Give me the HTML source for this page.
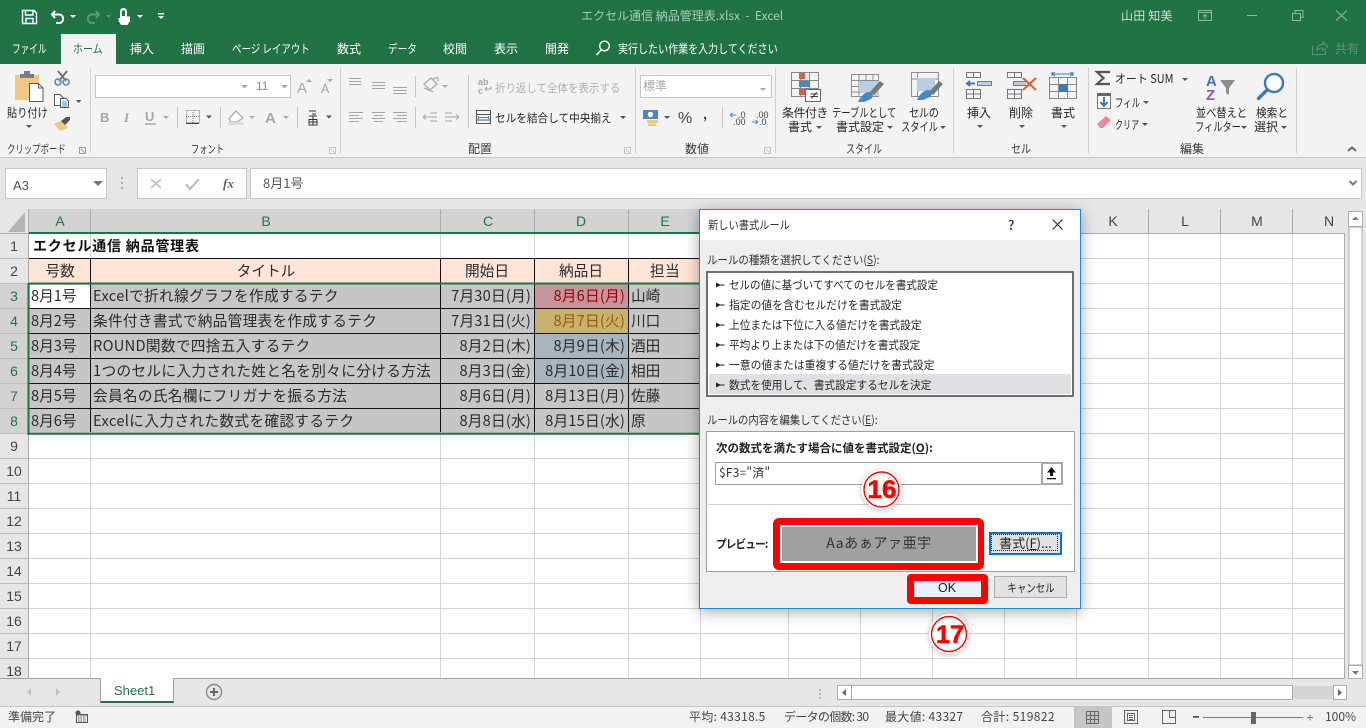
<!DOCTYPE html>
<html lang="ja"><head><meta charset="utf-8"><title>Excel</title>
<style>
html,body{margin:0;padding:0;width:1366px;height:728px;overflow:hidden;background:#e6e6e6}
body{font-family:"Noto Sans CJK JP","Liberation Sans",sans-serif;position:relative;color:#333}
.b{position:absolute}
.t{position:absolute;white-space:nowrap;line-height:20px;height:20px;font-size:12px;color:#3a3a3a;transform-origin:0 50%}
.c{transform:translateX(-50%);transform-origin:50% 50%}
.r{transform:translateX(-100%)}
.tab{color:#fff;top:39px;font-size:12px}
.dim{color:#b2b2b2}
.k{color:#262626}
.g{font-size:14.67px;color:#2b2b2b}
.hd{font-size:14px;color:#217346;font-family:"Liberation Sans",sans-serif;top:211px}
.hu{font-size:14px;color:#444;font-family:"Liberation Sans",sans-serif;top:211px}
.rn{font-size:14px;font-family:"Liberation Sans",sans-serif;color:#444;left:14px}
.rs{color:#217346}
.lb{font-size:11.5px;color:#262626;left:729px}
.gl{top:139px}
svg{position:absolute;left:0;top:0;overflow:visible}
</style></head><body>

<div class="b" style="left:0;top:0;width:1366px;height:64px;background:#217346"></div>
<div class="b" style="left:61px;top:34px;width:55px;height:30px;background:#f3f3f3"></div>
<div class="b" style="left:0;top:64px;width:1366px;height:93px;background:#f3f3f3;border-bottom:1px solid #c6c6c6"></div>

<!-- Title -->
<div class="t" style="left:581px;top:6px;color:#a9cab8">エクセル通信 納品管理表.xlsx&nbsp; -&nbsp; Excel</div>
<div class="t" style="left:1121px;top:6px;color:#cfe0d6;letter-spacing:.2px">山田 知美</div>

<!-- Tabs -->
<div class="t tab" style="left:12px;transform:scaleX(.72)">ファイル</div>
<div class="t tab" style="left:73px;color:#217346;transform:scaleX(.83)">ホーム</div>
<div class="t tab" style="left:130px">挿入</div>
<div class="t tab" style="left:181px">描画</div>
<div class="t tab" style="left:232px;transform:scaleX(.79)">ページ レイアウト</div>
<div class="t tab" style="left:337px">数式</div>
<div class="t tab" style="left:388px;transform:scaleX(.8)">データ</div>
<div class="t tab" style="left:443px">校閲</div>
<div class="t tab" style="left:494px">表示</div>
<div class="t tab" style="left:545px">開発</div>
<div class="t tab" style="left:618px;transform:scaleX(.835)">実行したい作業を入力してください</div>
<div class="t" style="left:1335px;top:39px;color:#5c9577">共有</div>

<!-- Ribbon text -->
<div class="t k" style="left:7px;top:103px;transform:scaleX(.85)">貼り付け</div>
<div class="t gl" style="left:7px;font-size:11.5px;transform:scaleX(.73)">クリップボード</div>
<div class="t gl" style="left:191px;font-size:11.5px;transform:scaleX(.72)">フォント</div>
<div class="t gl" style="left:468px">配置</div>
<div class="t gl" style="left:685px">数値</div>
<div class="t gl" style="left:846px;transform:scaleX(.75)">スタイル</div>
<div class="t gl" style="left:1011px;transform:scaleX(.83)">セル</div>
<div class="t gl" style="left:1180px">編集</div>
<div class="t dim" style="left:495px;top:78px;font-size:11.5px;transform:scaleX(.91)">折り返して全体を表示する</div>
<div class="t k" style="left:495px;top:108px;font-size:11.5px;transform:scaleX(.925)">セルを結合して中央揃え</div>
<div class="t k" style="left:782px;top:103px;letter-spacing:-.55px">条件付き</div>
<div class="t k" style="left:788px;top:117px">書式</div>
<div class="t k" style="left:832px;top:103px;transform:scaleX(.775)">テーブルとして</div>
<div class="t k" style="left:836px;top:117px">書式設定</div>
<div class="t k" style="left:909px;top:103px;transform:scaleX(.83)">セルの</div>
<div class="t k" style="left:901px;top:117px;transform:scaleX(.77)">スタイル</div>
<div class="t k" style="left:967px;top:103px">挿入</div>
<div class="t k" style="left:1009px;top:103px">削除</div>
<div class="t k" style="left:1051px;top:103px">書式</div>
<div class="t k" style="left:1115px;top:69px;transform:scaleX(.91)">オート SUM</div>
<div class="t k" style="left:1115px;top:93px;transform:scaleX(.7)">フィル</div>
<div class="t k" style="left:1115px;top:115px;transform:scaleX(.67)">クリア</div>
<div class="t k" style="left:1196px;top:103px;transform:scaleX(.85)">並べ替えと</div>
<div class="t k" style="left:1195px;top:117px;transform:scaleX(.77)">フィルター</div>
<div class="t k" style="left:1256px;top:103px;transform:scaleX(.89)">検索と</div>
<div class="t k" style="left:1254px;top:117px">選択</div>

<!-- Ribbon boxes -->
<div class="b" style="left:95px;top:75px;width:156px;height:21px;background:#fff;border:1px solid #c6c6c6"></div>
<div class="b" style="left:252px;top:75px;width:38px;height:21px;background:#fff;border:1px solid #c6c6c6;border-left:0"></div>
<div class="t" style="left:256px;top:76px;color:#8d8d8d;font-family:'Liberation Sans',sans-serif">11</div>
<div class="b" style="left:640px;top:75px;width:130px;height:21px;background:#fff;border:1px solid #c6c6c6"></div>
<div class="t" style="left:643px;top:76px;color:#aaa">標準</div>

<!-- Formula bar -->
<div class="b" style="left:5px;top:168px;width:100px;height:29px;background:#fff;border:1px solid #c6c6c6"></div>
<div class="b" style="left:137px;top:168px;width:108px;height:29px;background:#fff;border:1px solid #c6c6c6"></div>
<div class="b" style="left:250px;top:168px;width:1110px;height:29px;background:#fff;border:1px solid #c6c6c6"></div>
<div class="t" style="left:13px;top:176px;font-size:13px;color:#555;font-family:'Liberation Sans',sans-serif">A3</div>
<div class="t" style="left:263px;top:173px;font-size:13px;color:#555">8月1号</div>

<!-- Sheet -->
<div class="b" style="left:29px;top:234px;width:1316px;height:444px;background:#fff"></div>
<div class="b" style="left:29px;top:209px;width:671px;height:24px;background:#d2d2d2"></div>
<div class="b" style="left:0;top:284px;width:28px;height:150px;background:#d2d2d2"></div>
<div class="b" style="left:29px;top:259px;width:671px;height:24px;background:#fce4d6"></div>
<div class="b" style="left:29px;top:284px;width:671px;height:150px;background:#c6c6c6"></div>
<div class="b" style="left:30px;top:285px;width:60px;height:23px;background:#fff"></div>
<div class="b" style="left:535px;top:284px;width:93px;height:24px;background:#c4949b"></div>
<div class="b" style="left:535px;top:309px;width:93px;height:24px;background:#c8b06e"></div>
<div class="b" style="left:535px;top:334px;width:93px;height:49px;background:#a8b4be"></div>

<svg width="1366" height="728" viewBox="0 0 1366 728">
<!-- gridlines -->
<path d="M29 258.5H1345M29 283.5H1345M29 308.5H1345M29 333.5H1345M29 358.5H1345M29 383.5H1345M29 408.5H1345M29 433.5H1345M29 458.5H1345M29 483.5H1345M29 508.5H1345M29 533.5H1345M29 558.5H1345M29 583.5H1345M29 608.5H1345M29 633.5H1345M29 658.5H1345M90.5 234V678M440.5 234V678M534.5 234V678M628.5 234V678M700.5 234V678M788.5 234V678M860.5 234V678M932.5 234V678M1004.5 234V678M1076.5 234V678M1148.5 234V678M1220.5 234V678M1292.5 234V678" stroke="#d4d4d4" fill="none"/>
<!-- header separators -->
<path d="M90.5 209V233M440.5 209V233M534.5 209V233M628.5 209V233M1076.5 209V233M1148.5 209V233M1220.5 209V233M1292.5 209V233" stroke="#ababab"/>
<path d="M0 258.5H28M0 283.5H28M0 308.5H28M0 333.5H28M0 358.5H28M0 383.5H28M0 408.5H28M0 433.5H28M0 458.5H28M0 483.5H28M0 508.5H28M0 533.5H28M0 558.5H28M0 583.5H28M0 608.5H28M0 633.5H28M0 658.5H28" stroke="#bdbdbd"/>
<path d="M28.5 209V678" stroke="#ababab"/>
<path d="M0 233.5H28M1076 233.5H1345" stroke="#ababab"/>
<path d="M1344.5 233V678" stroke="#ababab"/>
<path d="M25 212V232H8Z" fill="#b4b4b4"/>
<!-- black table borders -->
<path d="M29 258.5H700M29 308.5H700M29 333.5H700M29 358.5H700M29 383.5H700M29 408.5H700M90.5 259V432M440.5 259V432M534.5 259V432M628.5 259V432" stroke="#111"/>
<!-- selection -->
<path d="M29 233H700M29 283.5H700M29 433.8H700" stroke="#217346" stroke-width="2"/>
<path d="M28.5 283V435" stroke="#217346" stroke-width="2"/>

<!-- QAT -->
<g fill="none" stroke="#fff">
<path d="M22.5 10.5H34L36.5 13V23.5H22.5Z" stroke-width="1.4"/>
<path d="M25.5 11V15H33V11M26 23V18.5H33V23" stroke-width="1.4"/>
<path d="M55 11L52 14.5L55 18M52.5 14.5H59C64.5 14.5 64.5 23 59 23H56" stroke-width="2"/>
<g stroke="#5d9a7c"><path d="M96 11L99 14.5L96 18M98.5 14.5H92C86.5 14.5 86.5 23 92 23H95" stroke-width="2"/></g>
</g>
<path d="M70 15H76L73 18ZM137 15H143L140 18Z" fill="#fff"/>
<path d="M106 15H111L108.5 18Z" fill="#5d9a7c"/>
<path d="M158 13H164V14.5H158ZM158 16H164L161 19Z" fill="#fff"/>
<path d="M120 11.5a3.5 3.5 0 0 1 7 0V16.5H130V21L127.5 25H121L118.500 20.5V18H120Z" fill="#fff"/>
<path d="M122 10.5H125V16H122Z" fill="#217346"/>
<!-- search -->
<circle cx="604.5" cy="46" r="4.8" fill="none" stroke="#fff" stroke-width="1.3"/><path d="M601 50L596.5 55" stroke="#fff" stroke-width="1.5"/>
<!-- window -->
<g fill="none" stroke="#8fb9a2">
<path d="M1198.5 10.5H1211.5V20.500H1198.5ZM1198.5 12.5H1211.5M1205 19V14.5M1203 16.5L1205 14.5L1207 16.5"/>
<path d="M1247 15.5H1257"/>
<path d="M1292.5 13.5H1300.5V20.5H1292.5ZM1295 13V10.5H1303V17.5H1300.5"/>
<path d="M1336 10.5L1347 20.5M1347 10.5L1336 20.5" stroke-width="1.100"/>
<path d="M1312.5 45.5V54.5H1325.5V50.5M1317 50C1317.5 46 1320 44.5 1323 44.5V42L1328 46.5L1323 50.5V48C1320.5 48 1318.5 48.5 1317 50Z" stroke="#5c9577"/>
</g>

<!-- separators -->
<path d="M90.5 68V153M340.5 68V153M635.5 68V153M775.5 68V153M953.5 68V153M1088.5 68V153M1296.5 68V153" stroke="#d0d0d0"/>
<path d="M177.5 107V128M220.5 107V128M297.5 107V128M415.5 76V97M415.5 107V128M468.5 75V128M722.5 107V128" stroke="#c6c6c6"/>
<!-- launchers -->
<g fill="none" stroke="#999"><path d="M79.5 147.5H85.5V153.5H79.5ZM81 149L84.5 152.5"/><path d="M329.5 147.5H335.5V153.5H329.5ZM331 149L334.5 152.5" stroke="#c4c4c4"/><path d="M624.5 147.5H630.5V153.5H624.5ZM626 149L629.5 152.5" stroke="#c4c4c4"/><path d="M764.5 147.5H770.5V153.5H764.5ZM766 149L769.5 152.5" stroke="#c4c4c4"/></g>

<!-- paste -->
<path d="M15 75H39V100H15Z" fill="#efc881"/>
<rect x="24" y="71" width="6" height="5" fill="#7c7c7c"/>
<path d="M20 74H34V78H20Z" fill="#7c7c7c"/>
<path d="M29.5 83.5H38.5L43 88V101.5H29.5Z" fill="#fff" stroke="#5a5a5a"/>
<path d="M38.5 83.5V88H43" fill="none" stroke="#5a5a5a"/>
<!-- scissors -->
<path d="M58 71L66 81M67 71L59 81" stroke="#6a6a6a" stroke-width="1.8" fill="none"/>
<circle cx="58" cy="82" r="3" fill="none" stroke="#4a86c5" stroke-width="1.5"/><circle cx="66" cy="82" r="3" fill="none" stroke="#4a86c5" stroke-width="1.5"/>
<!-- copy -->
<path d="M54.5 94.5H60L63 97.5V99H60.5V105.5H54.5Z" fill="#fff" stroke="#555"/>
<path d="M60.5 98.5H66L68.5 101V107.5H60.5Z" fill="#fff" stroke="#555"/>
<path d="M62 102H67M62 104H67M62 106H67" stroke="#4a86c5"/>
<!-- brush -->
<path d="M54 124L62 120L68 128L60 131Z" fill="#efc881"/>
<path d="M61 121L65 125L70 120L70 117L66 117Z" fill="#555"/>
<!-- carets -->
<path d="M76 100H81.5L78.75 103ZM26 125H32L29 128Z" fill="#555"/>
<g fill="#aaa"><path d="M241 85H248L244.5 88.5ZM281 85H288L284.5 88.5ZM163 116H169L166 119ZM249 116H255L252 119ZM283 116H289L286 119ZM442 85H448L445 88ZM760 88H766L763 91Z"/></g>
<g fill="#555"><path d="M206 115.5H212L209 118.5ZM326 115.5H332L329 118.5ZM620 116H626L623 119ZM664 116H670L667 119ZM816 126H822L819 129ZM887 126H893L890 129ZM940 126H946L943 129ZM977 125H983L980 128ZM1019 125H1025L1022 128ZM1061 125H1067L1064 128ZM1182 78H1188L1185 81ZM1143 101H1149L1146 104ZM1142 123H1148L1145 126ZM1241 126H1247L1244 129ZM1281 126H1287L1284 129Z"/></g>
<!-- font ctrls -->
<g font-family="Liberation Sans,sans-serif" font-weight="bold" fill="#a6a6a6">
<text x="100" y="122" font-size="13">B</text><text x="124" y="122" font-size="13" font-style="italic" font-family="Liberation Serif,serif">I</text><text x="145" y="121" font-size="13">U</text>
<text x="265" y="123" font-size="15">A</text></g>
<path d="M145 124H156" stroke="#a6a6a6" stroke-width="1.5"/>
<text x="297" y="93" font-size="15" fill="#a6a6a6" font-family="Liberation Sans,sans-serif">A</text>
<text x="321" y="93" font-size="12.5" fill="#a6a6a6" font-family="Liberation Sans,sans-serif">A</text>
<path d="M306 82L309 79L312 82ZM327 79H333L330 82Z" fill="#a6a6a6"/>
<path d="M186.5 110.5H199.5V122.5H186.5ZM193 110V123M186 116.5H200" fill="none" stroke="#777" stroke-dasharray="1 1"/><path d="M186 123.5H199" stroke="#444"/>
<path d="M229 119L236 111L243 118L237 122H231Z" fill="#fff" stroke="#a6a6a6" stroke-width="1.2"/><path d="M228 122H244V125H228Z" fill="#dcdcdc"/>
<path d="M309 111H316M312 114H316M309 116H317M309 119.5H317V125H309ZM313 116V125M309 122H317" fill="none" stroke="#333"/>
<!-- alignment -->
<g stroke="#a6a6a6" fill="none">
<path d="M349 78.5H361M349 81.5H361M349 84.5H361M372 82.5H385M372 85.5H385M372 88.5H385M393 87.5H407M393 90.5H407M393 93.5H407"/>
<path d="M349 112.5H363M349 115.5H359M349 118.5H363M349 121.5H359M372 112.5H385M374 115.5H383M372 118.5H385M374 121.5H383M393 112.5H407M397 115.5H407M393 118.5H407M397 121.5H407"/>
<path d="M430 113H437M430 121H437M423 117H437M423 117L426 114.5M423 117L426 119.5M445 113H452M445 121H452M445 117H459M459 117L456 114.5M459 117L456 119.5"/>
<path d="M424 88L433 92M424 84L431 78L437 84L430 90ZM433 79L438 77M438 77V81" stroke-width="1.2"/>
</g>
<text x="478" y="85" font-size="9" font-weight="bold" fill="#a6a6a6" font-family="Liberation Sans,sans-serif">ab</text>
<text x="478" y="94" font-size="9" font-weight="bold" fill="#a6a6a6" font-family="Liberation Sans,sans-serif">c</text>
<path d="M485 89H491V86M485 89L487 87M485 89L487 91" fill="none" stroke="#a6a6a6"/>
<path d="M476.5 110.5H490.5V123.5H476.5ZM476 114.5H491M476 120H491" fill="none" stroke="#555"/><path d="M478.5 117.5H488.5" stroke="#4a86c5"/><path d="M478.5 116V119M488.5 116V119" stroke="#4a86c5"/>
<!-- number -->
<path d="M643 110H658V119H643Z" fill="#4a86c5"/><circle cx="650.5" cy="114.5" r="2.7" fill="#fff"/>
<path d="M647 120H658V123H647ZM648 123.5H656V126H648Z" fill="#efc881"/>
<text x="678" y="123" font-size="16" fill="#444" font-family="Liberation Sans,sans-serif">%</text>
<text x="703" y="119" font-size="15" fill="#444" font-weight="bold" font-family="Liberation Sans,sans-serif">,</text>
<text x="738" y="118" font-size="9" fill="#444" font-family="Liberation Sans,sans-serif">.0</text><text x="733" y="125" font-size="9" fill="#444" font-family="Liberation Sans,sans-serif">.00</text>
<path d="M730 115H736M730 115L732.5 113M730 115L732.5 117" stroke="#4a86c5" fill="none"/>
<text x="756" y="118" font-size="9" fill="#444" font-family="Liberation Sans,sans-serif">.00</text><text x="759" y="125" font-size="9" fill="#444" font-family="Liberation Sans,sans-serif">.0</text>
<path d="M752 122H758M758 122L755.5 120M758 122L755.5 124" stroke="#4a86c5" fill="none"/>
<!-- Conditional format -->
<path d="M791.5 72.5H818.5V96.5H791.5ZM791 80.5H819M791 88.5H819M800.5 72V97M809.5 72V97" fill="none" stroke="#888"/>
<path d="M799 73H805V79H799Z" fill="#d9603d"/><path d="M799 81H810V87H799Z" fill="#4a86c5"/><path d="M799 89H807V95H799Z" fill="#d9603d"/>
<path d="M805.5 89.5H820.5V101.5H805.5Z" fill="#fff" stroke="#666"/>
<text x="809" y="99" font-size="12" fill="#333" font-family="DejaVu Sans,sans-serif">≠</text>
<!-- table style -->
<path d="M851.5 74.5H878.5V96.5H851.5ZM851 80.5H879M851 86.5H879M851 92H879M859 74V97M866 74V97M873 74V97" fill="none" stroke="#8c8c8c"/>
<path d="M859 81H879V96H870L863 92H859Z" fill="#b9cde3"/>
<path d="M870 92L880 81L884 84L874 95Z" fill="#777"/>
<path d="M858 102C860 97 864 93 868 92C873 92 874 96 871 99L864 102Z" fill="#4a86c5"/>
<!-- cell style -->
<path d="M911.5 72.5H938.5V96.5H911.5ZM911 79H939M917.5 72V97" fill="none" stroke="#8c8c8c"/>
<path d="M917 78H935V91H917Z" fill="#b9cde3"/>
<path d="M929 92L939 81L943 84L933 95Z" fill="#777"/>
<path d="M917 100C919 95 923 91 927 90C932 90 933 94 930 97L923 100Z" fill="#4a86c5"/>
<!-- insert -->
<path d="M966.5 72.5H980.5V77.5H966.5ZM973.5 72.5V77.5M966.5 89.5H980.5V98.5H966.5ZM966.5 94H980.5M973.5 89.5V98.5M977.5 81.5H991.5V85.5H977.5ZM984.5 81.5V85.5" fill="none" stroke="#777"/>
<path d="M978 82H991V85H978Z" fill="#b9cde3"/><path d="M967 83.5H975M970 81L967 83.5L970 86" fill="none" stroke="#3c78b8" stroke-width="2"/>
<!-- delete -->
<path d="M1007.5 72.5H1021.5V77.5H1007.5ZM1014.5 72.5V77.5M1007.5 89.5H1021.5V98.5H1007.5ZM1007.5 94H1021.5M1014.5 89.5V98.5M1013.5 81.5H1028V85.5H1013.5Z" fill="none" stroke="#777"/>
<path d="M1014 82H1026V85H1014Z" fill="#b9cde3"/><path d="M1023 78L1036 90M1036 78L1023 90" stroke="#d9603d" stroke-width="2.2"/>
<!-- format -->
<path d="M1049.5 77.5H1076.5V98.5H1049.5ZM1049 84.5H1077M1049 91.5H1077M1058.5 77V99M1067.5 77V99" fill="none" stroke="#888"/>
<path d="M1059 84H1068V92H1059Z" fill="#3c78b8"/>
<path d="M1052 74H1073M1052 72V76M1073 72V76M1052 74L1055 72M1052 74L1055 76M1073 74L1070 72M1073 74L1070 76" fill="none" stroke="#3c78b8"/>
<!-- sigma -->
<path d="M1110 72H1097L1103.5 78L1097 84H1110" fill="none" stroke="#555" stroke-width="2.2"/>
<!-- fill -->
<path d="M1097.5 93.5H1110.5V108.5H1097.5Z" fill="#fff" stroke="#777"/><path d="M1097 93H1111V96H1097Z" fill="#666"/><path d="M1104 97V105M1100.5 102L1104 106L1107.5 102" fill="none" stroke="#3c78b8" stroke-width="2"/>
<!-- clear -->
<path d="M1097 124L1106 116L1111 120L1103 128L1100 128Z" fill="#e88a9a"/>
<!-- sort -->
<text x="1206" y="86" font-size="15" font-weight="bold" fill="#3c78b8" font-family="Liberation Sans,sans-serif">A</text>
<text x="1206" y="100" font-size="15" font-weight="bold" fill="#8a5bb0" font-family="Liberation Sans,sans-serif">Z</text>
<path d="M1220 80H1235L1229 88V95L1226 93V88Z" fill="#8c8c8c"/>
<!-- find -->
<circle cx="1274" cy="83" r="9" fill="#fff" stroke="#3c78b8" stroke-width="2.4"/><path d="M1267 90L1258.5 98.5" stroke="#3c78b8" stroke-width="3.4" stroke-linecap="round"/>
<path d="M1348 151L1352 147.5L1356 151" fill="none" stroke="#666" stroke-width="2"/>

<!-- formula bar -->
<path d="M93 181H103L98 186Z" fill="#777"/>
<path d="M122 177V179M122 182V184M122 187V189" stroke="#999" stroke-width="1.5"/>
<path d="M151 179L161 188M161 179L151 188" stroke="#c0c0c0" stroke-width="1.6"/>
<path d="M186 184L190 189L199 179" fill="none" stroke="#c0c0c0" stroke-width="2.2"/>
<text x="223" y="188" font-size="13" font-style="italic" font-weight="bold" fill="#666" font-family="Liberation Serif,serif">fx</text>
<path d="M1349.5 181L1353 184.5L1356.5 181" fill="none" stroke="#777" stroke-width="2"/>

<!-- scrollbars -->
<path d="M1348.5 211.5H1362.5V226.5H1348.5Z" fill="#fff" stroke="#ababab"/>
<path d="M1349 227H1362V665H1349Z" fill="#fff" stroke="#ababab"/>
<path d="M1348.5 665.5H1362.5V678.5H1348.5Z" fill="#fff" stroke="#ababab"/>
<path d="M1352 220L1355.5 216.5L1359 220Z M1352 671H1359L1355.5 675Z" fill="#777"/>
<path d="M0 678.5H100M172 678.5H1345" stroke="#a0a0a0"/>
<path d="M0 706.5H1366" stroke="#c6c6c6"/>
</svg>

<!-- Grid text -->
<div class="t hd c" style="left:60px">A</div><div class="t hd c" style="left:266px">B</div><div class="t hd c" style="left:488px">C</div><div class="t hd c" style="left:581px">D</div><div class="t hd c" style="left:665px">E</div>
<div class="t hu c" style="left:1113px">K</div><div class="t hu c" style="left:1185px">L</div><div class="t hu c" style="left:1257px">M</div><div class="t hu c" style="left:1329px">N</div>
<div class="t rn c" style="top:236px">1</div><div class="t rn c" style="top:261px">2</div>
<div class="t rn c rs" style="top:286px">3</div><div class="t rn c rs" style="top:311px">4</div><div class="t rn c rs" style="top:336px">5</div><div class="t rn c rs" style="top:361px">6</div><div class="t rn c rs" style="top:386px">7</div><div class="t rn c rs" style="top:411px">8</div>
<div class="t rn c" style="top:436px">9</div><div class="t rn c" style="top:461px">10</div><div class="t rn c" style="top:486px">11</div><div class="t rn c" style="top:511px">12</div><div class="t rn c" style="top:536px">13</div><div class="t rn c" style="top:561px">14</div><div class="t rn c" style="top:586px">15</div><div class="t rn c" style="top:611px">16</div><div class="t rn c" style="top:636px">17</div><div class="t rn c" style="top:661px">18</div>

<div class="t g" style="left:33px;top:236px;font-weight:700;color:#111;font-size:14px;letter-spacing:.8px">エクセル通信 納品管理表</div>
<div class="t g c" style="left:60px;top:261px">号数</div>
<div class="t g c" style="left:266px;top:261px">タイトル</div>
<div class="t g c" style="left:487px;top:261px">開始日</div>
<div class="t g c" style="left:581px;top:261px">納品日</div>
<div class="t g c" style="left:665px;top:261px;letter-spacing:.5px">担当</div>

<div class="t g" style="left:31px;top:286px">8月1号</div><div class="t g" style="left:31px;top:311px">8月2号</div><div class="t g" style="left:31px;top:336px">8月3号</div><div class="t g" style="left:31px;top:361px">8月4号</div><div class="t g" style="left:31px;top:386px">8月5号</div><div class="t g" style="left:31px;top:411px">8月6号</div>

<div class="t g" style="left:93px;top:286px;letter-spacing:.32px">Excelで折れ線グラフを作成するテク</div>
<div class="t g" style="left:93px;top:311px;letter-spacing:.3px">条件付き書式で納品管理表を作成するテク</div>
<div class="t g" style="left:93px;top:336px;letter-spacing:.3px">ROUND関数で四捨五入するテク</div>
<div class="t g" style="left:93px;top:361px;letter-spacing:.33px">1つのセルに入力された姓と名を別々に分ける方法</div>
<div class="t g" style="left:93px;top:386px;letter-spacing:.3px">会員名の氏名欄にフリガナを振る方法</div>
<div class="t g" style="left:93px;top:411px;letter-spacing:.35px">Excelに入力された数式を確認するテク</div>

<div class="t g r" style="left:531px;top:286px;letter-spacing:.2px">7月30日(月)</div><div class="t g r" style="left:531px;top:311px;letter-spacing:.2px">7月31日(火)</div><div class="t g r" style="left:531px;top:336px;letter-spacing:.2px">8月2日(木)</div><div class="t g r" style="left:531px;top:361px;letter-spacing:.2px">8月3日(金)</div><div class="t g r" style="left:531px;top:386px;letter-spacing:.2px">8月6日(月)</div><div class="t g r" style="left:531px;top:411px;letter-spacing:.2px">8月8日(水)</div>
<div class="t g r" style="left:625px;top:286px;letter-spacing:.2px;color:#9c0006">8月6日(月)</div><div class="t g r" style="left:625px;top:311px;letter-spacing:.2px;color:#9c5700">8月7日(火)</div><div class="t g r" style="left:625px;top:336px;letter-spacing:.2px">8月9日(木)</div><div class="t g r" style="left:625px;top:361px;letter-spacing:.2px">8月10日(金)</div><div class="t g r" style="left:625px;top:386px;letter-spacing:.2px">8月13日(月)</div><div class="t g r" style="left:625px;top:411px;letter-spacing:.2px">8月15日(水)</div>
<div class="t g" style="left:631px;top:286px">山崎</div><div class="t g" style="left:631px;top:311px">川口</div><div class="t g" style="left:631px;top:336px">酒田</div><div class="t g" style="left:631px;top:361px">相田</div><div class="t g" style="left:631px;top:386px">佐藤</div><div class="t g" style="left:631px;top:411px">原</div>

<!-- Bottom -->
<div class="b" style="left:100px;top:678px;width:72px;height:23px;background:#fff;border:1px solid #a0a0a0;border-top:0;border-bottom:2px solid #217346;box-sizing:content-box"></div>
<div class="t" style="left:114px;top:681px;font-size:13px;color:#217346;font-family:'Liberation Sans',sans-serif">Sheet1</div>
<div class="b" style="left:0;top:707px;width:1366px;height:21px;background:#f1f1f1"></div>
<div class="b" style="left:1074px;top:707px;width:38px;height:21px;background:#c6c6c6"></div>
<div class="t" style="left:8px;top:707px;color:#444">準備完了</div>
<div class="t" style="left:689px;top:707px;color:#444;letter-spacing:.3px">平均: 43318.5</div>
<div class="t" style="left:784px;top:707px;color:#444;letter-spacing:-.7px">データの個数: 30</div>
<div class="t" style="left:885px;top:707px;color:#444;letter-spacing:.3px">最大値: 43327</div>
<div class="t" style="left:981px;top:707px;color:#444;letter-spacing:.4px">合計: 519822</div>
<div class="t" style="left:1325px;top:707px;color:#444">100%</div>

<svg width="1366" height="728" viewBox="0 0 1366 728">
<path d="M31 688L27 692L31 696ZM56 688L60 692L56 696Z" fill="#c0c0c0"/>
<circle cx="214" cy="692" r="7.5" fill="none" stroke="#8a8a8a" stroke-width="1.4"/><path d="M214 688V696M210 692H218" stroke="#666" stroke-width="2"/>
<path d="M820 689V691M820 693V695M820 697V699" stroke="#aaa" stroke-width="1.5"/>
<path d="M837.5 685.5H851.5V699.5H837.5ZM1333.5 685.5H1346.5V699.5H1333.5Z" fill="#fff" stroke="#ababab"/>
<path d="M851.5 685.5H1292.5V699.5H851.5Z" fill="#fff" stroke="#ababab"/>
<path d="M1293 686H1333V699H1293Z" fill="#d4d4d4"/>
<path d="M846 689L842 692.5L846 696ZM1338 689L1342 692.5L1338 696Z" fill="#666"/>
<circle cx="78" cy="713" r="2.6" fill="#555"/>
<path d="M76.5 714.5H87.5V722.5H76.5Z M80 715H87" fill="none" stroke="#555"/><path d="M78 717H86M78 719H86M78 721H86" stroke="#555" stroke-dasharray="1.5 1"/>
<path d="M1086.5 711.5H1098.5V723.5H1086.5ZM1086 715.5H1099M1086 719.5H1099M1090.5 711V724M1094.5 711V724" fill="none" stroke="#666"/>
<path d="M1124.5 710.5H1137.5V723.5H1124.5ZM1127.5 713.5H1134.5V720.5H1127.5ZM1129 715.5H1133M1129 717.5H1133M1129 719.5H1133" fill="none" stroke="#666"/>
<path d="M1162.5 710.5H1175.5V723.5H1162.5ZM1169.5 710.5V717.5H1175.5" fill="none" stroke="#666"/>
<path d="M1193 717.5H1199M1203 717.5H1303M1307 717.5H1313M1310 714.5V720.5" stroke="#777"/>
<path d="M1193 716.5H1199" stroke="#555"/>
<rect x="1251" y="712" width="5" height="12" fill="#666"/>
</svg>

<!-- Dialog -->
<div class="b" style="left:699px;top:209px;width:380px;height:398px;background:#eee;border:1px solid #1e88d8;box-shadow:0 3px 14px rgba(0,0,0,.35)"></div>
<div class="b" style="left:700px;top:210px;width:380px;height:30px;background:#fff"></div>
<div class="t" style="left:708px;top:215px;font-size:11.5px;color:#333;transform:scaleX(.89)">新しい書式ルール</div>
<div class="t" style="left:1008px;top:215px;font-size:13px;color:#333;font-weight:500">?</div>
<div class="t" style="left:707px;top:250px;font-size:11.5px;color:#333;transform:scaleX(.91)">ルールの種類を選択してください(<u>S</u>):</div>
<div class="b" style="left:706px;top:271px;width:364px;height:122px;background:#fff;border:2px solid #6f6f6f"></div>
<div class="b" style="left:709px;top:374px;width:362px;height:20px;background:#e0dfe3"></div>
<div class="t lb" style="top:275px;transform:scaleX(.915)">セルの値に基づいてすべてのセルを書式設定</div>
<div class="t lb" style="top:295px;transform:scaleX(.94)">指定の値を含むセルだけを書式設定</div>
<div class="t lb" style="top:315px;transform:scaleX(.93)">上位または下位に入る値だけを書式設定</div>
<div class="t lb" style="top:335px;transform:scaleX(.925)">平均より上または下の値だけを書式設定</div>
<div class="t lb" style="top:355px;transform:scaleX(.94)">一意の値または重複する値だけを書式設定</div>
<div class="t lb" style="top:375px;transform:scaleX(.93)">数式を使用して、書式設定するセルを決定</div>
<div class="t" style="left:707px;top:410px;font-size:11.5px;color:#333;transform:scaleX(.9)">ルールの内容を編集してください(<u>E</u>):</div>
<div class="b" style="left:706px;top:431px;width:367px;height:139px;background:#fff;border:1px solid #a0a0a0"></div>
<div class="t" style="left:716px;top:438px;font-size:11.5px;font-weight:700;color:#222">次の数式を満たす場合に値を書式設定(<u>O</u>):</div>
<div class="b" style="left:715px;top:462px;width:325px;height:21px;background:#fff;border:1px solid #a0a0a0;border-right:0"></div>
<div class="b" style="left:1041px;top:462px;width:18px;height:19px;background:#fff;border:2px solid #a8a8a8"></div>
<div class="t" style="left:719px;top:463px;font-size:12px;color:#333;letter-spacing:.2px">$F3="済"</div>
<div class="b" style="left:708px;top:504px;width:364px;height:1px;background:#d0d0d0"></div>
<div class="t" style="left:716px;top:534px;font-size:11.5px;font-weight:700;color:#222;letter-spacing:-1px;transform:scaleX(.93)">プレビュー:</div>
<div class="b" style="left:773px;top:518px;width:211px;height:52px;border-radius:6px;background:#f00"></div>
<div class="b" style="left:780px;top:525px;width:198px;height:38px;background:#a0a0a0;border:2px solid #fff;box-sizing:border-box"></div>
<div class="t c" style="left:879px;top:533px;font-size:14px;letter-spacing:.6px;color:#333">Aaあぁアァ亜宇</div>
<div class="b" style="left:989px;top:532px;width:69px;height:19px;background:#e1e1e1;border:2px solid #0078d7"></div>
<div class="b" style="left:991px;top:534px;width:67px;height:17px;border:1px dotted #222;box-sizing:border-box"></div>
<div class="t c" style="left:1025.5px;top:533px;font-size:13px;color:#222">書式(<u>F</u>)...</div>
<div class="b" style="left:907px;top:574px;width:81px;height:30px;border-radius:4px;background:#f00"></div>
<div class="b" style="left:914px;top:581px;width:67px;height:16px;background:#e5f1fb"></div>
<div class="t c" style="left:947px;top:578px;font-size:12.5px;color:#222;font-family:'Liberation Sans',sans-serif">OK</div>
<div class="b" style="left:994px;top:576px;width:71px;height:20px;background:#e1e1e1;border:1px solid #adadad"></div>
<div class="t c" style="left:1030.5px;top:578px;font-size:11.5px;color:#222;transform:translateX(-50%) scaleX(.82)">キャンセル</div>

<svg width="1366" height="728" viewBox="0 0 1366 728">
<path d="M1052.5 219.5L1062.5 229.5M1062.5 219.5L1052.5 229.5" stroke="#333" stroke-width="1.2"/>
<g fill="#222"><path d="M716 282.5L720 284.5H724.5V285.5H720L716 287.5Z"/><path d="M716 302.5L720 304.5H724.5V305.5H720L716 307.5Z"/><path d="M716 322.5L720 324.5H724.5V325.5H720L716 327.5Z"/><path d="M716 342.5L720 344.5H724.5V345.5H720L716 347.5Z"/><path d="M716 362.5L720 364.5H724.5V365.5H720L716 367.5Z"/><path d="M716 382.5L720 384.5H724.5V385.5H720L716 387.5Z"/></g>
<path d="M1051.5 467L1047 472.5H1050V476H1053V472.5H1056ZM1047 478H1056V479.2H1047Z" fill="#111"/>
<g style="filter:drop-shadow(0 1px 3px rgba(0,0,0,.25))"><circle cx="881.5" cy="489.5" r="20" fill="#fff"/></g>
<circle cx="881.5" cy="489.5" r="17.5" fill="#fff" stroke="#f00" stroke-width="1.4"/>
<text x="882" y="498" text-anchor="middle" font-size="25" font-weight="700" fill="#f00" stroke="#f00" stroke-width=".6" font-family="Liberation Sans,sans-serif" textLength="29" lengthAdjust="spacingAndGlyphs">16</text>
<g style="filter:drop-shadow(0 1px 3px rgba(0,0,0,.25))"><circle cx="949" cy="634" r="20" fill="#fff"/></g>
<circle cx="949" cy="634" r="17.5" fill="#fff" stroke="#f00" stroke-width="1.4"/>
<text x="950" y="643" text-anchor="middle" font-size="25" font-weight="700" fill="#f00" stroke="#f00" stroke-width=".6" font-family="Liberation Sans,sans-serif" textLength="28" lengthAdjust="spacingAndGlyphs">17</text>
</svg>
</body></html>
